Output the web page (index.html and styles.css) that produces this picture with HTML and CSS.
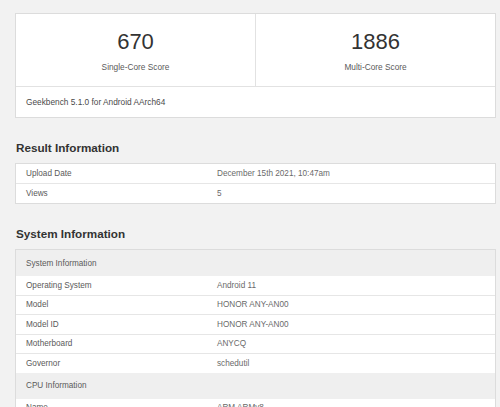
FILE: index.html
```html
<!DOCTYPE html>
<html>
<head>
<meta charset="utf-8">
<link rel="stylesheet" href="styles.css">
</head>
<body>
<div class="page">
  <div class="card">
    <div class="scores">
      <div class="score">
        <div class="num">670</div>
        <div class="lbl">Single-Core Score</div>
      </div>
      <div class="score">
        <div class="num">1886</div>
        <div class="lbl">Multi-Core Score</div>
      </div>
    </div>
    <div class="card-foot">Geekbench 5.1.0 for Android AArch64</div>
  </div>

  <h2 class="heading">Result Information</h2>
  <div class="table">
    <div class="row"><div class="k">Upload Date</div><div class="v">December 15th 2021, 10:47am</div></div>
    <div class="row"><div class="k">Views</div><div class="v">5</div></div>
  </div>

  <h2 class="heading">System Information</h2>
  <div class="table">
    <div class="row head"><div class="k">System Information</div></div>
    <div class="row r2"><div class="k">Operating System</div><div class="v">Android 11</div></div>
    <div class="row r2"><div class="k">Model</div><div class="v">HONOR ANY-AN00</div></div>
    <div class="row r2"><div class="k">Model ID</div><div class="v">HONOR ANY-AN00</div></div>
    <div class="row r2"><div class="k">Motherboard</div><div class="v">ANYCQ</div></div>
    <div class="row r2"><div class="k">Governor</div><div class="v">schedutil</div></div>
    <div class="row head"><div class="k">CPU Information</div></div>
    <div class="row r2"><div class="k">Name</div><div class="v">ARM ARMv8</div></div>
  </div>
</div>
</body>
</html>
```
FILE: styles.css
```css
html, body {
  margin: 0;
  padding: 0;
  background: #f2f2f2;
  font-family: "Liberation Sans", Arial, sans-serif;
  overflow: hidden;
}
.page {
  width: 481px;
  margin-left: 15px;
  padding-top: 13px;
}
.card {
  background: #fff;
  border: 1px solid #dcdcdc;
}
.scores {
  display: grid;
  grid-template-columns: 239px 1fr;
  height: 72px;
  border-bottom: 1px solid #e2e2e2;
}
.score {
  display: flex;
  flex-direction: column;
  align-items: center;
  padding-top: 16px;
}
.score + .score {
  border-left: 1px solid #e2e2e2;
}
.num {
  font-size: 22px;
  line-height: 24px;
  color: #333;
}
.lbl {
  font-size: 8.3px;
  line-height: 12px;
  margin-top: 7px;
  color: #5a5a5a;
}
.card-foot {
  height: 30px;
  display: flex;
  align-items: center;
  padding-left: 10px;
  font-size: 8.3px;
  color: #4a4a4a;
}
.heading {
  margin: 20px 0 5px 1px;
  font-size: 11.7px;
  line-height: 20px;
  font-weight: bold;
  color: #333;
}
.table {
  background: #fff;
  border: 1px solid #dcdcdc;
}
.row {
  display: grid;
  grid-template-columns: 191px 1fr;
  height: 19px;
  align-items: center;
  font-size: 8.2px;
  color: #5a5a5a;
}
.row + .row {
  border-top: 1px solid #e6e6e6;
}
.row.r2 {
  height: 18.5px;
}
.row.head {
  height: 26px;
  background: #efefef;
  border-top: none;
}
.row.head + .row {
  border-top: none;
}
.k {
  padding-left: 10px;
}
.v {
  padding-left: 10px;
  color: #6a6a6a;
}
```
